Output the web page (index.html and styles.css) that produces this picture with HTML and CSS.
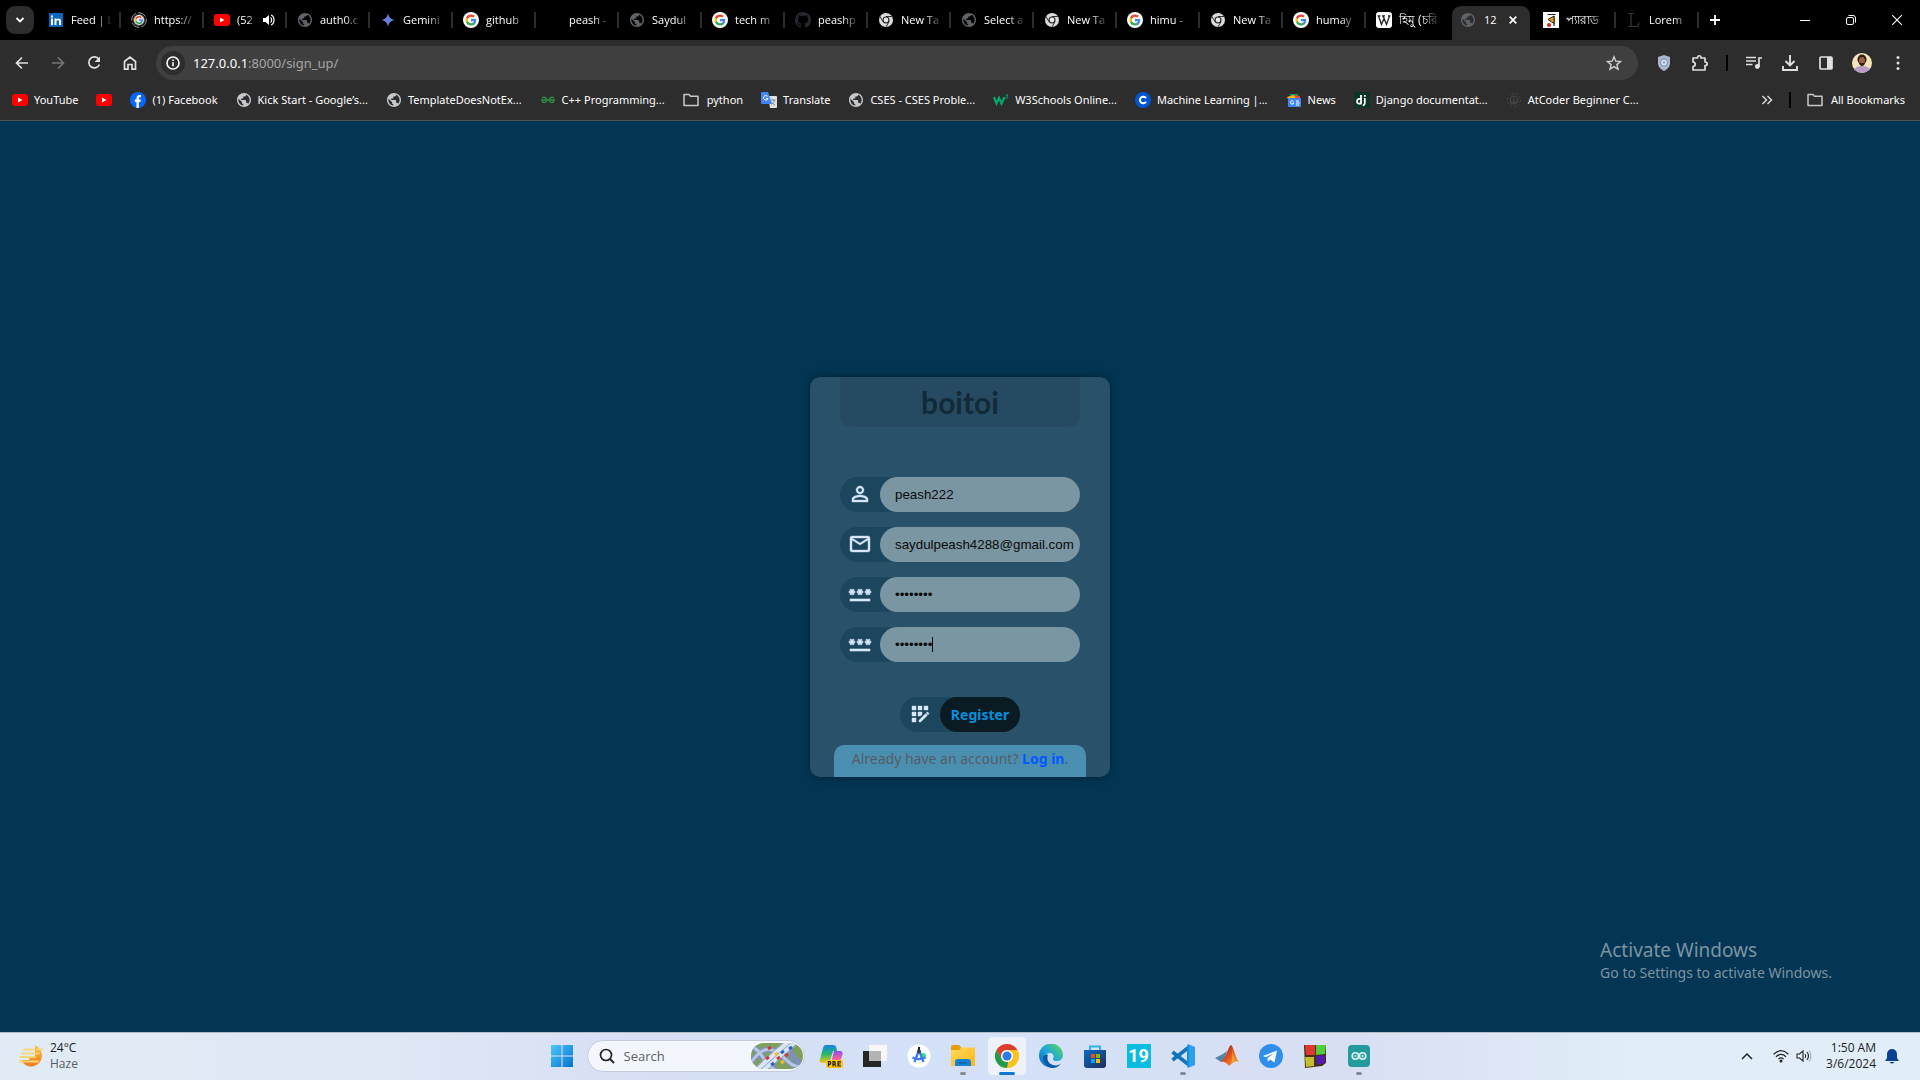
FILE: index.html
```html
<!DOCTYPE html>
<html lang="en">
<head>
<meta charset="utf-8">
<title>127.0.0.1:8000/sign_up/</title>
<link rel="stylesheet" href="styles.css">
</head>
<body>
<svg class="defs" aria-hidden="true">
  <defs>
    <linearGradient id="gem" x1="0" x2="1"><stop offset="0" stop-color="#8b6fd0"/><stop offset="1" stop-color="#3f8fe8"/></linearGradient>
    <linearGradient id="win" x1="0" y1="0" x2="1" y2="1"><stop offset="0" stop-color="#4cc8fa"/><stop offset="1" stop-color="#0672ce"/></linearGradient>
    <linearGradient id="cop" x1="0" y1="0" x2="0" y2="1"><stop offset="0" stop-color="#1483e6"/><stop offset=".5" stop-color="#26b86c"/><stop offset="1" stop-color="#f4c518"/></linearGradient>
    <linearGradient id="cop2" x1="0" y1="0" x2="0" y2="1"><stop offset="0" stop-color="#8f4cf0"/><stop offset=".6" stop-color="#f0609c"/><stop offset="1" stop-color="#f8a03c"/></linearGradient>
    <linearGradient id="fold" x1="0" y1="0" x2="1" y2="1"><stop offset="0" stop-color="#ffd75e"/><stop offset="1" stop-color="#fcb716"/></linearGradient>
    <linearGradient id="edg" x1="0" y1="1" x2="1" y2="0"><stop offset="0" stop-color="#0c62b8"/><stop offset=".5" stop-color="#1fa8dc"/><stop offset="1" stop-color="#64d84c"/></linearGradient>
    <linearGradient id="sto" x1="0" y1="0" x2="1" y2="1"><stop offset="0" stop-color="#0c6cc4"/><stop offset="1" stop-color="#1e2c58"/></linearGradient>
    <linearGradient id="sun" x1="0" y1="0" x2="0" y2="1"><stop offset="0" stop-color="#f9c23c"/><stop offset="1" stop-color="#f17a1c"/></linearGradient>
    <linearGradient id="mat" x1="0" y1="0" x2="1" y2="1"><stop offset="0" stop-color="#7a1a14"/><stop offset=".5" stop-color="#e5541a"/><stop offset="1" stop-color="#f8b03c"/></linearGradient>
    <clipPath id="pill"><rect width="52" height="26" rx="13"/></clipPath>
    <clipPath id="round"><circle cx="10" cy="10" r="10"/></clipPath>
  </defs>
  <symbol id="i-globe" viewBox="2 2 20 20"><path fill="currentColor" d="M12 2C6.48 2 2 6.48 2 12s4.480 10 10 10 10-4.480 10-10S17.520 2 12 2zm-1 17.930c-3.950-.49-7-3.850-7-7.930 0-.62.08-1.210.21-1.790L9 15v1c0 1.100.9 2 2 2v1.930zm6.900-2.540c-.26-.81-1-1.390-1.900-1.390h-1v-3c0-.55-.45-1-1-1H8v-2h2c.55 0 1-.45 1-1V7h2c1.100 0 2-.9 2-2v-.41c2.930 1.190 5 4.060 5 7.410 0 2.080-.8 3.970-2.100 5.390z"/></symbol>
  <symbol id="i-g" viewBox="0 0 24 24"><path fill="#4285f4" d="M22.560 12.250c0-.78-.07-1.530-.2-2.250H12v4.260h5.920c-.26 1.370-1.040 2.530-2.210 3.310v2.770h3.570c2.080-1.920 3.280-4.740 3.280-8.090z"/><path fill="#34a853" d="M12 23c2.970 0 5.460-.98 7.280-2.660l-3.570-2.770c-.98.66-2.230 1.060-3.710 1.060-2.860 0-5.290-1.930-6.160-4.530H2.180v2.840C3.990 20.530 7.700 23 12 23z"/><path fill="#fbbc05" d="M5.840 14.090c-.22-.66-.35-1.360-.35-2.090s.13-1.430.35-2.090V7.070H2.180C1.430 8.550 1 10.220 1 12s.43 3.450 1.180 4.930z"/><path fill="#ea4335" d="M12 5.380c1.620 0 3.060.56 4.210 1.640l3.150-3.150C17.450 2.090 14.970 1 12 1 7.700 1 3.990 3.470 2.180 7.070l3.660 2.840c.87-2.600 3.300-4.530 6.160-4.530z"/></symbol>
  <symbol id="i-google" viewBox="0 0 16 16"><circle cx="8" cy="8" r="8" fill="#fff"/><use href="#i-g" x="2" y="2" width="12" height="12"/></symbol>
  <symbol id="i-google-ring" viewBox="0 0 16 16"><circle cx="8" cy="8" r="7.300" fill="none" stroke="#9a9a9a" stroke-width="1" stroke-dasharray="9 2"/><circle cx="8" cy="8" r="6" fill="#555"/><circle cx="8" cy="8" r="5" fill="#e8e8e8"/><use href="#i-g" x="3.500" y="3.500" width="9" height="9"/></symbol>
  <symbol id="i-yt" viewBox="0 0 16 16"><rect y="2" width="16" height="12" rx="3" fill="#f00"/><path d="M6 5.500v5L10.500 8z" fill="#fff"/></symbol>
  <symbol id="i-in" viewBox="0 0 16 16"><rect x="1" y="1" width="14" height="14" rx="1" fill="#0a66c2"/><path fill="#fff" d="M3 6.500h2V13H3zM3 3.500h2v2H3zM6.500 6.500h2v1c1-1.700 4.500-1.500 4.500 1.500v4h-2V9.500c0-1.800-2.500-1.600-2.500 0V13h-2z"/></symbol>
  <symbol id="i-gemini" viewBox="0 0 16 16"><path fill="url(#gem)" d="M8 1c.7 4.300 2.700 6.300 7 7-4.300.7-6.300 2.700-7 7-.7-4.300-2.700-6.300-7-7 4.300-.7 6.300-2.700 7-7z"/></symbol>
  <symbol id="i-chrome-gray" viewBox="0 0 16 16"><circle cx="8" cy="8" r="7" fill="#dcdcdc"/><path d="M8 4.500h6.500M5 9.700 1.800 4.200M11 9.700 7.700 15.500" stroke="#333" stroke-width="1"/><circle cx="8" cy="8" r="3.500" fill="#222"/><circle cx="8" cy="8" r="2.400" fill="#e8e8e8"/></symbol>
  <symbol id="i-github" viewBox="0 0 16 16"><path fill="currentColor" d="M8 0C3.580 0 0 3.580 0 8c0 3.540 2.290 6.530 5.470 7.590.4.07.55-.17.55-.38 0-.19-.01-.82-.01-1.490-2.010.37-2.530-.49-2.690-.94-.09-.23-.48-.94-.82-1.130-.28-.15-.68-.52-.01-.53.63-.01 1.080.58 1.230.82.72 1.210 1.870.87 2.330.66.07-.52.28-.87.51-1.070-1.780-.2-3.640-.89-3.640-3.950 0-.87.31-1.590.82-2.150-.08-.2-.36-1.020.08-2.120 0 0 .67-.21 2.200.82.64-.18 1.320-.27 2-.27s1.360.09 2 .27c1.530-1.040 2.200-.82 2.200-.82.44 1.100.16 1.920.08 2.120.51.56.82 1.270.82 2.150 0 3.070-1.870 3.750-3.650 3.950.29.25.54.73.54 1.480 0 1.070-.01 1.930-.01 2.200 0 .21.15.46.55.38A8.010 8.010 0 0016 8c0-4.420-3.580-8-8-8z"/></symbol>
  <symbol id="i-wiki" viewBox="0 0 16 16"><rect width="16" height="16" rx="3" fill="#fff"/><path fill="none" stroke="#222" stroke-width="1.300" d="m2.500 4 3 8.500L8.500 5.500M7 4l3.500 8.500L13.500 4M1.500 3.800h3M6 3.800h3M12 3.800h2.500"/></symbol>
  <symbol id="i-book" viewBox="0 0 16 16"><rect width="16" height="16" fill="#fff"/><path d="M4.500 2.500h8M11 4v10" fill="none" stroke="#222" stroke-width="1.200"/><path d="m5 7.500 6-3.500v7.500z" fill="#f39c12" stroke="#222"/><circle cx="6" cy="13" r="2" fill="#d22"/></symbol>
  <symbol id="i-lorem" viewBox="0 0 16 16"><path fill="none" stroke="#383838" stroke-width="1.200" d="M2 1.500h6M5 1.500v13M2 14.500h10l1-4"/></symbol>
  <symbol id="i-folder" viewBox="0 0 16 16"><path fill="none" stroke="#c7c7c7" stroke-width="1.500" stroke-linejoin="round" d="M1 2.500h5l1.500 1.700H15V13.500H1z"/></symbol>
  <symbol id="i-facebook" viewBox="0 0 16 16"><circle cx="8" cy="8" r="8" fill="#0866ff"/><path fill="#fff" d="M6.500 16V10H4.800V7.600h1.700V6.500C6.500 4 7.800 3 9.800 3l1.200.1v2.100h-.9C9 5.200 8.800 5.800 8.800 6.600v1h2.100L10.500 10H8.800v6z"/></symbol>
  <symbol id="i-gfg" viewBox="0 0 16 16"><path fill="none" stroke="#2f8d46" stroke-width="1.400" d="M2 5.800C3.500 4.800 6.800 5.200 6.800 8s-3.600 3.300-4.800 1.200M14 5.800C12.500 4.800 9.200 5.200 9.200 8s3.600 3.300 4.800 1.200M1 8h14"/></symbol>
  <symbol id="i-translate" viewBox="0 0 16 16"><path fill="#dfe1e5" d="M7 4h8a1 1 0 0 1 1 1v10a1 1 0 0 1-1 1H9z"/><path d="M9.500 8h5M12 7v1M13.500 8c0 2-2 4-3 4.500M10.500 9.500c.5 1.500 2 3 3.500 3.500" stroke="#777" fill="none" stroke-width=".8"/><path fill="#4285f4" d="M1 0h6l4 12H1a1 1 0 0 1-1-1V1a1 1 0 0 1 1-1z"/><path d="M6.500 4.300A2.300 2.300 0 1 0 7 6.500H5" fill="none" stroke="#fff"/></symbol>
  <symbol id="i-w3" viewBox="0 0 16 16"><path fill="none" stroke="#04aa6d" stroke-width="2.200" d="m1 5 2.500 6.500L6 6l2.500 5.500L11.500 5"/><path fill="none" stroke="#04aa6d" d="M12.500 3H15l-1.300 1.500c2 0 1.500 2.500-1.200 1.700"/></symbol>
  <symbol id="i-coursera" viewBox="0 0 16 16"><circle cx="8" cy="8" r="8" fill="#0056d2"/><path d="M11 6.200a3.300 3.300 0 1 0 0 3.600" fill="none" stroke="#fff" stroke-width="2"/></symbol>
  <symbol id="i-news" viewBox="0 0 16 16"><path fill="#0c9d58" d="M4 2h8v5H4z"/><path fill="#ea4335" d="m8 3 6 1v4H8z"/><path fill="#fbbc04" d="m1 5 7-2 2 4H2z"/><rect x="2" y="6" width="13" height="9" rx="1" fill="#4285f4"/><path d="M7.500 9.400a1.700 1.700 0 1 0 .3 1.600H6.500M10 9h3M10 11h3.500M10 13h3" stroke="#fff" fill="none"/></symbol>
  <symbol id="i-django" viewBox="0 0 16 16"><rect width="16" height="16" fill="#0c3527"/><path fill="none" stroke="#fff" stroke-width="1.800" d="M7 3v8.500c-2.500.6-4 0-4-2.200s2-2.800 4-2M10.800 6v5c0 1.800-.8 2.300-2 2.600M10.800 3v1.700"/></symbol>
  <symbol id="i-atcoder" viewBox="0 0 16 16"><g fill="none" stroke="#474747"><circle cx="8" cy="8" r="4"/><circle cx="8" cy="8" r="6.500" stroke-dasharray="2 2"/><path d="M5 10h6M8 6v6"/></g></symbol>
  <symbol id="i-password" viewBox="0 0 24 24"><path fill="currentColor" stroke="currentColor" stroke-width=".6" d="M2 17h20v2H2v-2zm1.150-4.050L4 11.470l.85 1.480 1.300-.75-.85-1.480H7v-1.500H5.300l.85-1.470L4.850 7 4 8.470 3.150 7l-1.300.75.85 1.470H1v1.500h1.700l-.85 1.480 1.300.75zm6.700-.75 1.300.75.85-1.480.85 1.480 1.300-.75-.85-1.480H15v-1.500h-1.700l.85-1.470-1.300-.75L12 8.470 11.150 7l-1.300.75.85 1.470H9v1.500h1.700l-.85 1.480zM23 9.220h-1.700l.85-1.470-1.300-.75L20 8.470 19.150 7l-1.300.75.85 1.470H17v1.500h1.700l-.85 1.480 1.300.75.85-1.480.85 1.480 1.300-.75-.85-1.480H23v-1.500z"/></symbol>
</svg>

<header class="browser">
  <div class="tabstrip">
    <button class="tab-search" aria-label="Search tabs"><svg width="10" height="10" viewBox="0 0 10 10"><path d="m1.500 3 3.500 3.500L8.500 3" fill="none" stroke="#fff" stroke-width="1.800"/></svg></button>
    <nav class="tabs" aria-label="Tabs">
      <div class="tab"><svg class="fav"><use href="#i-in"/></svg><span class="title">Feed | L</span></div>
      <div class="tab"><svg class="fav"><use href="#i-google-ring"/></svg><span class="title">https://</span></div>
      <div class="tab"><svg class="fav"><use href="#i-yt"/></svg><span class="title narrow">(52</span><svg width="14" height="14" viewBox="0 0 14 14"><path fill="#fff" d="M1 5v4h2.500L7 12V2L3.500 5z"/><path d="M8.500 4.500c1.500 1 1.500 4 0 5M9 2c4 1.500 4 8.500 0 10" fill="none" stroke="#fff" stroke-width="1.200"/></svg></div>
      <div class="tab"><svg class="fav dim"><use href="#i-globe" x="1" y="1" width="14" height="14"/></svg><span class="title">auth0.c</span></div>
      <div class="tab"><svg class="fav"><use href="#i-gemini"/></svg><span class="title">Gemini</span></div>
      <div class="tab"><svg class="fav"><use href="#i-google"/></svg><span class="title">github</span></div>
      <div class="tab"><svg class="fav"></svg><span class="title">peash -</span></div>
      <div class="tab"><svg class="fav dim"><use href="#i-globe" x="1" y="1" width="14" height="14"/></svg><span class="title">Saydul</span></div>
      <div class="tab"><svg class="fav"><use href="#i-google"/></svg><span class="title">tech m</span></div>
      <div class="tab"><svg class="fav faint"><use href="#i-github"/></svg><span class="title">peashp</span></div>
      <div class="tab"><svg class="fav"><use href="#i-chrome-gray"/></svg><span class="title">New Ta</span></div>
      <div class="tab"><svg class="fav dim"><use href="#i-globe" x="1" y="1" width="14" height="14"/></svg><span class="title">Select a</span></div>
      <div class="tab"><svg class="fav"><use href="#i-chrome-gray"/></svg><span class="title">New Ta</span></div>
      <div class="tab"><svg class="fav"><use href="#i-google"/></svg><span class="title">himu -</span></div>
      <div class="tab"><svg class="fav"><use href="#i-chrome-gray"/></svg><span class="title">New Ta</span></div>
      <div class="tab"><svg class="fav"><use href="#i-google"/></svg><span class="title">humay</span></div>
      <div class="tab last"><svg class="fav"><use href="#i-wiki"/></svg><span class="title bangla">হিমু (চরি</span></div>
      <div class="tab active"><svg class="fav dim"><use href="#i-globe" x="1" y="1" width="14" height="14"/></svg><span class="title">12</span><button class="close" aria-label="Close tab"><svg width="8" height="8" viewBox="0 0 8 8"><path d="m.7.7 6.600 6.600M7.300.7.7 7.300" stroke="#fff" stroke-width="1.700"/></svg></button></div>
      <div class="tab"><svg class="fav"><use href="#i-book"/></svg><span class="title bangla">প্যারাড</span></div>
      <div class="tab"><svg class="fav"><use href="#i-lorem"/></svg><span class="title">Lorem</span></div>
    </nav>
    <button class="new-tab" aria-label="New tab"><svg width="12" height="12" viewBox="0 0 12 12"><path d="M6 1v10M1 6h10" stroke="#fff" stroke-width="1.800"/></svg></button>
    <div class="window-buttons">
      <button aria-label="Minimize"><svg width="10" height="10" viewBox="0 0 10 10"><path d="M0 5.500h10" stroke="#fff"/></svg></button>
      <button aria-label="Restore"><svg width="10" height="10" viewBox="0 0 10 10"><rect x=".5" y="2.500" width="7" height="7" rx="1.500" fill="none" stroke="#fff"/><path d="M2.500.5H7A2.500 2.500 0 0 1 9.500 3v4.500" fill="none" stroke="#fff"/></svg></button>
      <button aria-label="Close"><svg width="10" height="10" viewBox="0 0 10 10"><path d="m0 0 10 10M10 0 0 10" stroke="#fff" stroke-width="1.100"/></svg></button>
    </div>
  </div>

  <div class="toolbar">
    <button aria-label="Back"><svg width="16" height="16" viewBox="0 0 16 16"><path d="M14 8H3M8 2.500 2.500 8 8 13.500" fill="none" stroke="#e0e0e0" stroke-width="1.700"/></svg></button>
    <button aria-label="Forward"><svg width="16" height="16" viewBox="0 0 16 16"><path d="M2 8h11M8 2.500 13.500 8 8 13.500" fill="none" stroke="#757575" stroke-width="1.700"/></svg></button>
    <button aria-label="Reload"><svg width="16" height="16" viewBox="0 0 16 16"><path d="M12.800 4.200A5.500 5.500 0 1 0 13.400 9.500" fill="none" stroke="#e0e0e0" stroke-width="1.700"/><path d="M14 1.500V7H8.500z" fill="#e0e0e0"/></svg></button>
    <button aria-label="Home"><svg width="16" height="16" viewBox="0 0 16 16"><path d="M2.500 6.500 8 2l5.500 4.500v7.700H10V9.500H6v4.700H2.500z" fill="none" stroke="#e0e0e0" stroke-width="1.700"/></svg></button>
    <div class="omnibox">
      <span class="site-info"><svg width="16" height="16" viewBox="0 0 16 16"><circle cx="8" cy="8" r="6" fill="none" stroke="#fff" stroke-width="1.600"/><path d="M8 7.300v4M8 4.500v1.600" stroke="#fff" stroke-width="1.600"/></svg></span>
      <span class="url"><b>127.0.0.1</b>:8000/sign_up/</span>
      <svg width="16" height="16" viewBox="0 0 16 16"><path d="m8 1.800 1.800 4.400 4.700.4-3.600 3 1.100 4.600-4-2.500-4 2.500 1.100-4.600-3.600-3 4.700-.4z" fill="none" stroke="#d0d0d0" stroke-width="1.400"/></svg>
    </div>
    <button aria-label="Shield extension"><svg width="14" height="16" viewBox="0 0 14 16"><path d="M7 0 13 2v6c0 4-3 6.500-6 8-3-1.500-6-4-6-8V2z" fill="#a9b6cf"/><circle cx="7" cy="7.500" r="3.500" fill="#dfe5f2" stroke="#7d8cab"/><circle cx="7" cy="7.500" r="1.200" fill="#8d9cbb"/></svg></button>
    <button aria-label="Extensions"><svg width="18" height="18" viewBox="0 0 18 18"><path d="M2 4h4.500c0-3 3.500-3 3.500 0h4v4c3 0 3 3.500 0 3.500V16H2v-3.500c3-.3 3-4.200 0-4.500z" fill="none" stroke="#e0e0e0" stroke-width="1.700" stroke-linejoin="round"/></svg></button>
    <i class="sep"></i>
    <button aria-label="Media"><svg width="16" height="16" viewBox="0 0 16 16"><path d="M0 2.500h10M0 6h10M0 9.500h6.500M13 12V3h3" fill="none" stroke="#e0e0e0" stroke-width="1.700"/><circle cx="11.300" cy="11.500" r="2.400" fill="#e0e0e0"/></svg></button>
    <button aria-label="Downloads"><svg width="16" height="16" viewBox="0 0 16 16"><path d="M8 0v10M3.500 6 8 10.500 12.500 6M1 11v4h14v-4" fill="none" stroke="#e0e0e0" stroke-width="1.900"/></svg></button>
    <button aria-label="Side panel"><svg width="16" height="16" viewBox="0 0 16 16"><rect x="2" y="2" width="12" height="12" rx="1" fill="none" stroke="#e0e0e0" stroke-width="1.700"/><path d="M9 2h5v12H9z" fill="#e0e0e0"/></svg></button>
    <button aria-label="Profile"><svg width="20" height="20" viewBox="0 0 20 20"><g clip-path="url(#round)"><path fill="#f5e3ba" d="M0 0h20v20H0z"/><path fill="#b99bc7" d="M1 20c0-5 4-7 9-7s9 2 9 7z"/><ellipse cx="10" cy="6.500" rx="4.500" ry="5" fill="#2b1c14"/><ellipse cx="10" cy="8" rx="3" ry="4" fill="#9a6240"/><path d="M7 9.500c0 4.500 6 4.500 6 0l-3 .8z" fill="#2b1c14"/></g></svg></button>
    <button aria-label="Menu"><svg width="16" height="16" viewBox="0 0 16 16" fill="#e0e0e0"><circle cx="8" cy="2.500" r="1.500"/><circle cx="8" cy="8" r="1.500"/><circle cx="8" cy="13.500" r="1.500"/></svg></button>
  </div>

  <nav class="bookmarks" aria-label="Bookmarks">
    <a href="#"><svg class="fav"><use href="#i-yt"/></svg>YouTube</a>
    <a href="#" aria-label="YouTube"><svg class="fav"><use href="#i-yt"/></svg></a>
    <a href="#"><svg class="fav"><use href="#i-facebook"/></svg>(1) Facebook</a>
    <a href="#"><svg class="fav light"><use href="#i-globe" x="1" y="1" width="14" height="14"/></svg>Kick Start - Google’s...</a>
    <a href="#"><svg class="fav light"><use href="#i-globe" x="1" y="1" width="14" height="14"/></svg>TemplateDoesNotEx...</a>
    <a href="#"><svg class="fav"><use href="#i-gfg"/></svg>C++ Programming...</a>
    <a href="#" class="dir"><svg class="fav"><use href="#i-folder"/></svg>python</a>
    <a href="#"><svg class="fav"><use href="#i-translate"/></svg>Translate</a>
    <a href="#"><svg class="fav light"><use href="#i-globe" x="1" y="1" width="14" height="14"/></svg>CSES - CSES Proble...</a>
    <a href="#"><svg class="fav"><use href="#i-w3"/></svg>W3Schools Online...</a>
    <a href="#"><svg class="fav"><use href="#i-coursera"/></svg>Machine Learning |...</a>
    <a href="#"><svg class="fav"><use href="#i-news"/></svg>News</a>
    <a href="#"><svg class="fav"><use href="#i-django"/></svg>Django documentat...</a>
    <a href="#"><svg class="fav"><use href="#i-atcoder"/></svg>AtCoder Beginner C...</a>
    <span class="bookmarks-end">
      <button aria-label="More bookmarks"><svg width="12" height="10" viewBox="0 0 12 10"><path d="m1.500 1 4 4-4 4M6.500 1l4 4-4 4" fill="none" stroke="#d8d8d8" stroke-width="1.500"/></svg></button>
      <i class="sep"></i>
      <a href="#" class="dir"><svg class="fav"><use href="#i-folder"/></svg>All Bookmarks</a>
    </span>
  </nav>
</header>

<main class="page">
  <form class="card">
    <h1 class="logo">boitoi</h1>
    <div class="fields">
      <div class="field">
        <label for="username" aria-label="Username"><svg width="24" height="24" viewBox="0 0 24 24"><path fill="currentColor" stroke="currentColor" stroke-width=".4" d="M12 5.900c1.160 0 2.100.94 2.100 2.100s-.94 2.100-2.100 2.100S9.900 9.160 9.900 8s.94-2.100 2.100-2.100m0 9c2.970 0 6.100 1.460 6.100 2.100v1.100H5.900V17c0-.64 3.130-2.100 6.100-2.100M12 4C9.790 4 8 5.790 8 8s1.790 4 4 4 4-1.790 4-4-1.790-4-4-4zm0 9c-2.670 0-8 1.340-8 4v3h16v-3c0-2.660-5.330-4-8-4z"/></svg></label>
        <input id="username" type="text" value="peash222">
      </div>
      <div class="field">
        <label for="email" aria-label="Email"><svg width="24" height="24" viewBox="0 0 24 24"><path fill="currentColor" stroke="currentColor" stroke-width=".4" d="M22 6c0-1.100-.9-2-2-2H4c-1.100 0-2 .9-2 2v12c0 1.100.9 2 2 2h16c1.100 0 2-.9 2-2V6zm-2 0l-8 4.990L4 6h16zm0 12H4V8l8 5 8-5v10z"/></svg></label>
        <input id="email" type="email" value="saydulpeash4288@gmail.com">
      </div>
      <div class="field">
        <label for="password" aria-label="Password"><svg width="24" height="24"><use href="#i-password"/></svg></label>
        <input id="password" type="password" value="peash222">
      </div>
      <div class="field">
        <label for="confirm" aria-label="Confirm password"><svg width="24" height="24"><use href="#i-password"/></svg></label>
        <input id="confirm" type="password" value="peash222">
        <span class="caret"></span>
      </div>
    </div>
    <div class="field submit">
      <label for="register" aria-label="Register"><svg width="24" height="24" viewBox="0 0 24 24"><path fill="currentColor" stroke="currentColor" stroke-width=".4" d="M10 4h4v4h-4zM4 16h4v4H4zM4 10h4v4H4zM4 4h4v4H4zM14 12.420V10h-4v4h2.420zM20.880 11.290l-1.170-1.170c-.16-.16-.42-.16-.58 0L18.250 11 20 12.750l.88-.88c.16-.16.16-.42 0-.58zM11 18.250V20h1.750l6.670-6.670-1.750-1.750zM16 4h4v4h-4z"/></svg></label>
      <button id="register" type="button">Register</button>
    </div>
    <p class="login">Already have an account? <a href="#">Log in</a>.</p>
  </form>
  <div class="watermark"><strong>Activate Windows</strong><span>Go to Settings to activate Windows.</span></div>
</main>

<footer class="taskbar">
  <div class="weather">
    <svg width="24" height="24" viewBox="0 0 24 24"><path fill="url(#sun)" d="M15 1c5 2 8 6 8 11a11 11 0 0 1-21 4h8l1-4h5V1z"/><path stroke="#f7d678" stroke-width="2" stroke-linecap="round" d="M5 5.500h9M3 9.500h17M1 13h15M0 17.500h19M18 5.500h5"/></svg>
    <div><span>24°C</span><span class="muted">Haze</span></div>
  </div>
  <div class="apps">
    <button class="app" aria-label="Start"><svg width="24" height="24" viewBox="0 0 24 24" fill="url(#win)"><path d="M1 1h10.500v10.500H1zM12.500 1H23v10.500H12.500zM1 12.500h10.500V23H1zM12.500 12.500H23V23H12.500z"/></svg></button>
    <div class="search">
      <svg width="16" height="16" viewBox="0 0 16 16"><circle cx="7" cy="7" r="5.500" fill="none" stroke="#222" stroke-width="1.700"/><path d="m11 11 4 4" stroke="#222" stroke-width="1.900"/></svg>
      <input type="text" placeholder="Search" aria-label="Search">
      <svg width="52" height="26" viewBox="0 0 52 26"><g clip-path="url(#pill)"><path fill="#7fa05a" d="M0 0h52v26H0z"/><g fill="none"><path stroke="#7d92b8" stroke-width="6" d="M-2 22C8 8 14 4 24 8s14 18 30 16M0 4c10 0 14 22 28 24M32-2c8 8 8 20 24 26"/><path stroke="#b7c7e2" stroke-width="3" d="M-2 22C8 8 14 4 24 8s14 18 30 16M0 4c10 0 14 22 28 24"/><path stroke="#dbe5f5" stroke-width="9" d="M8 28 44-4"/><path stroke="#8fa4c8" stroke-width="1" d="M8 28 44-4M2 26 36-4M15 28 50-2"/></g><g stroke-width="3"><path stroke="#d23a32" d="m15 16 3-2M26 16l3-2M34 13l3-2M17 6l3-2"/><path stroke="#2a62d4" d="m30 10 3-2M38 6l3-2M20 22l3-2"/><path stroke="#eebd30" d="m24 12 3-2M30 20l3-2"/></g></g></svg>
    </div>
    <button class="app" aria-label="Copilot"><svg width="24" height="24" viewBox="0 0 24 24"><path fill="url(#cop)" d="M7 1h7c2 0 3 1 3.500 3L18 7h-4l-3 10c-.5 1.500-1 2-2.500 2H3c-2 0-3-1.500-2-4L4 4c.5-2 1.300-3 3-3z"/><path fill="url(#cop2)" d="M15 7h6c2 0 3 1.500 2.500 3.500l-2 6C21 18 20 19 18 19h-8c1.500 0 2-.7 2.500-2z"/><rect x="7" y="16" width="17" height="8" rx="2" fill="#ffc20e"/><path fill="none" stroke="#222" stroke-width="1.200" d="M9.500 22.500v-5h1.500q1.500 1.400 0 2.800H9.500M14 22.500v-5h1.500q1.500 1.400 0 2.800H14M15.500 20l1.500 2.500M22 17.800h-3V22h3M19 20h2.500"/></svg></button>
    <button class="app" aria-label="Task view"><svg width="24" height="24" viewBox="0 0 24 24"><rect y="7" width="18" height="16" fill="#262626"/><rect x="6" y="1" width="18" height="16" fill="#f7f7f7"/><rect x="6" y="7" width="12" height="10" fill="#b4b4b4"/></svg></button>
    <button class="app" aria-label="Android Studio"><svg width="24" height="24" viewBox="0 0 24 24"><circle cx="12" cy="12" r="11.500" fill="#fff"/><circle cx="16" cy="12" r="3" fill="#3ddc84"/><path fill="none" stroke="#3b7bf0" stroke-width="2.300" d="M12 6 7.500 18M12 6l4.500 12M5.500 13.500c4 2 9 2 13 0"/><path d="M12 3v3" stroke="#223" stroke-width="2"/><circle cx="12" cy="7.500" r="2" fill="#345"/></svg></button>
    <button class="app open" aria-label="File Explorer"><svg width="24" height="24" viewBox="0 0 24 24"><path fill="#e29c0c" d="M0 3q0-2 2-2h6l2 2v4H0z"/><path fill="url(#fold)" d="M0 6h8l2.500-2.500H24V22H0z"/><path fill="#1481d2" d="M4 22v-4q0-3 3-3h10q3 0 3 3v4z"/><path stroke="#0c5ea4" stroke-width="1.500" d="M8 19h8"/></svg></button>
    <button class="app open current" aria-label="Chrome"><svg width="24" height="24" viewBox="0 0 24 24"><circle cx="12" cy="12" r="12" fill="#fcc31e"/><path fill="#dd3c30" d="M1.600 6A12 12 0 0 1 22.400 6H12a6 6 0 0 0-5.200 9z"/><path fill="#219a52" d="M1.600 6 6.800 15A6 6 0 0 0 12 18l1-.1L12 24A12 12 0 0 1 1.600 6z"/><path fill="#fcc31e" d="M12 24l5.200-9A6 6 0 0 0 17 8.500L16 6h6.400A12 12 0 0 1 12 24z"/><circle cx="12" cy="12" r="6" fill="#fff"/><circle cx="12" cy="12" r="4.500" fill="#2c7be8"/></svg></button>
    <button class="app" aria-label="Edge"><svg width="24" height="24" viewBox="0 0 24 24"><path fill="url(#edg)" d="M0 12A12 12 0 0 1 24 11c0 4-3 6-6.500 6-2.500 0-4-1-3.500-2.300 1.500-2 .5-5.700-3-5.700-4 0-5.500 4-4 8 1.500 3.500 5 6.500 10 5.500A12 12 0 0 1 0 12z"/><path fill="#0c59a8" d="M9 11c-2 5 1 10.500 8 10.500 2 0 4-1.200 5-2.500-3 6-11 7-15.500 1S4 10 9 11z"/></svg></button>
    <button class="app" aria-label="Microsoft Store"><svg width="24" height="24" viewBox="0 0 24 24"><path d="M7 7V2.500h10V7" fill="none" stroke="#28b4f0" stroke-width="2"/><path fill="url(#sto)" d="M1 6h22v15q0 3-3 3H4q-3 0-3-3z"/><path fill="#f04e1f" d="M8 10h4v4H8z"/><path fill="#7fba00" d="M13 10h4v4h-4z"/><path fill="#00a4ef" d="M8 15h4v4H8z"/><path fill="#ffb900" d="M13 15h4v4h-4z"/></svg></button>
    <button class="app" aria-label="19"><span class="nineteen">19</span></button>
    <button class="app open" aria-label="VS Code"><svg width="24" height="24" viewBox="0 0 24 24"><path d="M1.500 8 17.500 20.500M1.500 16 17.500 3.500" stroke="#1173b8" stroke-width="3.600"/><path fill="#2ba0ee" d="m17 0 7 3v18l-7 3-1-3V3z"/><path fill="#1c8ad4" d="M16 2 18 .4V23.600L16 22z"/></svg></button>
    <button class="app" aria-label="MATLAB"><svg width="24" height="24" viewBox="0 0 24 24"><path fill="#4f86a8" d="m0 14 8-4 4-3-3 10-3 1z"/><path fill="url(#mat)" d="M6 17c5-1 7-15 10-16 2 0 4 12 8 17-4-2-6 1-10 4-2-3-4-4-8-5z"/><path fill="#f6a83a" d="M16 1c2 3 2 12 0 19 1-1 3-3 4-3-2-5-2-12-4-16z"/></svg></button>
    <button class="app" aria-label="Telegram"><svg width="24" height="24" viewBox="0 0 24 24"><circle cx="12" cy="12" r="12" fill="#318fec"/><path fill="#fff" d="m4 12 14-5.500-2.500 12-4.500-3-2.200 2.200-.3-3.500L15 9l-8 4.300z"/></svg></button>
    <button class="app" aria-label="Code::Blocks"><svg width="24" height="24" viewBox="0 0 24 24"><path fill="#431" d="M1 1h22v18l-4 3-17 2z"/><path fill="#e03830" d="M2 1h10v10H3z"/><path fill="#52ce3c" d="M13 1h10l-1 9-9 1z"/><path fill="#c4bd32" d="M2 13h9v9l-8 1z"/><path fill="#5518b0" d="m13 12 9-1v8l-8 2z"/></svg></button>
    <button class="app open" aria-label="Arduino"><svg width="24" height="24" viewBox="0 0 24 24"><rect x="1" y="1" width="22" height="22" rx="4" fill="#249a9c"/><g fill="none" stroke="#d9f2f0" stroke-width="1.600"><circle cx="8.400" cy="12" r="3.200"/><circle cx="15.600" cy="12" r="3.200"/></g><path d="M7 12h2.800M14.200 12H17M15.600 10.600v2.800" stroke="#d9f2f0"/></svg></button>
  </div>
  <div class="tray">
    <svg width="12" height="8" viewBox="0 0 12 8"><path d="m1 7 5-5 5 5" fill="none" stroke="#222" stroke-width="1.500"/></svg>
    <span class="status">
      <svg width="16" height="14" viewBox="0 0 16 14"><g fill="none" stroke="#222" stroke-width="1.200"><path d="M.6 5.200q7.400-7 14.800 0M3 7.700q5-4.600 10 0M5.400 10.100q2.600-2.300 5.200 0"/></g><circle cx="8" cy="12" r="1.500" fill="#222"/></svg>
      <svg width="16" height="14" viewBox="0 0 16 14"><g fill="none" stroke="#222" stroke-width="1.100"><path d="M1 5v4h2.500L7 12V2L3.500 5zM9 5q1.500 2 0 4M11 3q3 4 0 8"/><path stroke="#aab" d="M13 1.500q4 5.500 0 11"/></g></svg>
    </span>
    <div class="clock"><span>1:50 AM</span><span>3/6/2024</span></div>
    <svg width="14" height="16" viewBox="0 0 14 16"><path fill="#0a3f94" d="M2 6a5 5 0 0 1 10 0v4l2 3H0l2-3zM4.500 14h5q-2.500 3-5 0z"/></svg>
  </div>
</footer>
</body>
</html>
```
FILE: styles.css
```css
* { box-sizing: border-box; }

body {
  margin: 0;
  min-height: 100vh;
  display: flex;
  flex-direction: column;
  background: #033654;
  font-family: "Noto Sans", "Open Sans", sans-serif;
  font-size: 12px;
  color: #fff;
}

button { border: 0; padding: 0; background: none; color: inherit; font: inherit; }
a { color: inherit; text-decoration: none; }
svg { display: block; flex: none; }
.defs { position: absolute; width: 0; height: 0; }
.fav { width: 16px; height: 16px; }
.dim { color: #5f6368; }
.light { color: #c4c7cc; }
.faint { color: #24292f; }

/* Tab strip */
.browser { background: #2d2d2d; border-bottom: 1px solid #545454; }
.tabstrip { display: flex; align-items: center; height: 40px; background: #000; font-family: "Open Sans", sans-serif; font-size: 11px; }
.tab-search { display: grid; place-items: center; width: 28px; height: 28px; margin: 0 4px 0 6px; border-radius: 9px; background: #2d2d2d; }
.tabs { display: flex; align-self: stretch; }
.tab { position: relative; display: flex; align-items: center; gap: 7px; width: 83px; padding: 0 10px; }
.tab::after { content: ""; position: absolute; right: 0; top: 12px; width: 2px; height: 16px; background: #2d2d2d; }
.tab.last::after, .tab.active::after { display: none; }
.title { flex: none; width: 40px; line-height: 18px; white-space: nowrap; mask-image: linear-gradient(90deg, #000 60%, rgba(0, 0, 0, .1)); }
.title.narrow { width: 18px; }
.title.bangla { font-size: 12px; }
.tab.active { width: 78px; margin: 6px 3px 0; padding: 0 8px 6px; gap: 8px; border-radius: 9px 9px 0 0; background: #2d2d2d; }
.active .title { width: 13px; mask-image: none; }
.close { margin-left: 4px; }
.new-tab { display: grid; place-items: center; width: 28px; height: 28px; margin-left: 2px; }
.window-buttons { display: flex; margin-left: auto; }
.window-buttons button { display: grid; place-items: center; width: 46px; height: 40px; }

/* Address row */
.toolbar { display: flex; align-items: center; height: 46px; padding: 0 4px; }
.toolbar > button { display: grid; place-items: center; width: 36px; height: 36px; }
.omnibox { flex: 1; display: flex; align-items: center; gap: 8px; height: 34px; margin: 0 8px; padding: 0 16px 0 5px; border-radius: 17px; background: #3f3f3f; }
.site-info { display: grid; place-items: center; width: 24px; height: 24px; border-radius: 50%; background: #2d2d2d; }
.url { flex: 1; font-size: 13px; color: #a6a6a6; }
.url b { font-weight: 400; color: #fff; }
.sep { width: 2px; height: 16px; margin: 0 8px; background: #000; }

/* Bookmarks */
.bookmarks { display: flex; align-items: center; gap: 18px; height: 34px; padding: 0 15px 7px 12px; font-size: 11px; white-space: nowrap; }
.bookmarks a { display: flex; align-items: center; gap: 6px; }
.bookmarks a.dir { gap: 8px; }
.bookmarks-end { display: flex; align-items: center; gap: 8px; margin-left: auto; }

/* Sign-up page */
.page { position: relative; flex: 1; display: grid; place-items: center; }
.card { display: flex; flex-direction: column; align-items: center; width: 300px; border-radius: 10px; background: #29526a; box-shadow: 0 0 10px rgba(0, 0, 0, .4); overflow: hidden; }
.logo { width: 240px; height: 50px; margin: 0 0 50px; border-radius: 0 0 10px 10px; background: #264a62; color: #122a38; font: 700 30px/50px "Lato", sans-serif; text-align: center; }
.fields { display: grid; gap: 15px; }
.field { position: relative; display: flex; width: 240px; height: 35px; border-radius: 18px; background: #1c465e; color: #d8e8fa; }
.field label { display: grid; place-items: center; width: 40px; }
.field input { width: 200px; padding: 0 0 0 15px; border: 0; border-radius: 18px; background: #7a96a2; color: #0a0a0a; font-family: "Liberation Sans", Arial, sans-serif; outline: none; }
.caret { position: absolute; left: 92px; top: 10px; width: 1px; height: 15px; background: #000; }
.submit { width: 120px; margin: 35px 0 13px; }
.submit button { width: 80px; border-radius: 18px; background: #0a1b24; color: #0590dc; font-size: 14px; font-weight: 700; }
.login { width: 252px; height: 32px; margin: 0; border-radius: 10px 10px 0 0; background: #4b8fb0; color: #555c66; font-size: 14px; line-height: 28px; text-align: center; white-space: nowrap; }
.login a { color: #0059ff; font-weight: 700; }
.watermark { position: absolute; right: 88px; bottom: 49px; display: grid; color: #7e93a1; font-size: 14px; line-height: 20px; }
.watermark strong { font-size: 19px; font-weight: 400; line-height: 26px; }

/* Taskbar */
.taskbar { display: grid; grid-template-columns: 1fr auto 1fr; align-items: center; height: 48px; padding-bottom: 1px; border-top: 1px solid #b4bcc6; background: linear-gradient(90deg, #e1ebf5, #dfe8f5 20%, #d6dff4 35%, #d3e1f8 50%, #d8dff3 70%, #e1edf8 85%); color: #1c1c1c; font-family: "Open Sans", sans-serif; }
.weather { display: flex; align-items: center; gap: 7px; padding-left: 19px; line-height: 16px; }
.weather div, .clock { display: grid; }
.muted { color: #555c64; }
.apps { display: flex; align-items: center; }
.app { position: relative; display: grid; place-items: center; width: 44px; height: 46px; }
.app svg { z-index: 1; }
.app.current::before { content: ""; position: absolute; inset: 4px 3px; border-radius: 4px; background: #edf1fa; }
.app.open::after { content: ""; position: absolute; left: 19px; bottom: 4px; width: 6px; height: 3px; border-radius: 2px; background: #858a94; }
.app.current::after { left: 14px; width: 16px; background: #0a78d4; }
.nineteen { width: 24px; height: 24px; background: #0abce0; color: #fff; font: 700 18px/24px "Roboto", sans-serif; }
.search { display: flex; align-items: center; gap: 9px; width: 218px; height: 32px; margin: 0 4px 0 3px; padding: 0 1px 0 11px; border: 1px solid #c2cbe0; border-radius: 16px; background: #f3f6fc; }
.search input { flex: 1; min-width: 0; padding: 0; border: 0; background: none; font: 13px "Open Sans", sans-serif; }
.search input::placeholder { color: #5c5f66; }
.tray { display: flex; align-items: center; justify-content: flex-end; padding-right: 21px; gap: 9px; }
.status { display: flex; gap: 7px; margin: 0 5px 0 11px; }
.clock { text-align: right; line-height: 16px; }
```
